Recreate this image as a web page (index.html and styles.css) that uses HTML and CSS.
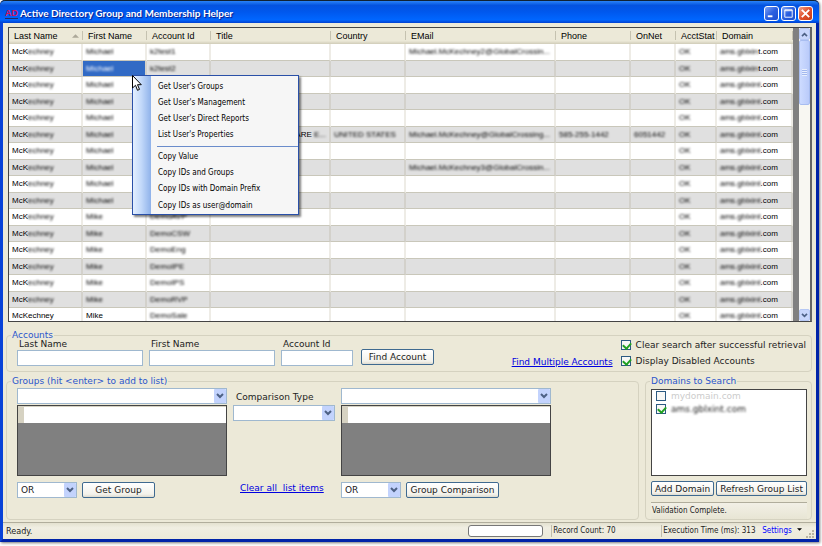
FILE: index.html
```html
<!DOCTYPE html>
<html lang="en">
<head>
  <meta charset="UTF-8">
  <meta name="viewport" content="width=device-width, initial-scale=1.0">
  <title>Active Directory Group and Membership Helper</title>
  <link rel="stylesheet" href="styles.css">
</head>
<body>
  <div class="window">
    <header class="titlebar">
      <span class="logo">AD</span>
      <h1>Active Directory Group and Membership Helper</h1>
      <button class="win-btn" aria-label="Minimize"><svg viewBox="0 0 14 14"><rect x="3" y="9" width="5" height="2" fill="#fff"/></svg></button>
      <button class="win-btn" aria-label="Maximize"><svg viewBox="0 0 14 14"><path d="M3 3h8v8H3z M3 4h8" fill="none" stroke="#fff"/></svg></button>
      <button class="win-btn close" aria-label="Close"><svg viewBox="0 0 14 14"><path d="M3 3l8 8M11 3l-8 8" stroke="#fff" stroke-width="2"/></svg></button>
    </header>

    <main class="client">
      <div class="grid-panel">
        <div class="grid">
          <div class="table-wrap">
            <table>
              <colgroup>
                <col class="c-last"><col class="c-first"><col class="c-id"><col><col class="c-country">
                <col class="c-mail"><col class="c-phone"><col class="c-net"><col class="c-stat"><col class="c-domain">
              </colgroup>
              <thead>
                <tr>
                  <th>Last Name <svg class="sort" viewBox="0 0 8 4"><path d="M0 4l4-4 4 4z" fill="#aca899"/></svg></th>
                  <th>First Name</th><th>Account Id</th><th>Title</th><th>Country</th>
                  <th>EMail</th><th>Phone</th><th>OnNet</th><th>AcctStat</th><th>Domain</th>
                </tr>
              </thead>
              <tbody id="rows"></tbody>
            </table>
          </div>
          <div class="scrollbar">
            <button class="sb-btn" aria-label="Scroll up"><svg viewBox="0 0 8 6"><path d="M1 5l3-3 3 3" fill="none" stroke="#4d6185" stroke-width="2"/></svg></button>
            <div class="thumb"><i></i></div>
            <button class="sb-btn down" aria-label="Scroll down"><svg viewBox="0 0 8 6"><path d="M1 1l3 3 3-3" fill="none" stroke="#4d6185" stroke-width="2"/></svg></button>
          </div>
        </div>

        <div class="menu">
          <button>Get User's Groups</button>
          <button>Get User's Management</button>
          <button>Get User's Direct Reports</button>
          <button>List User's Properties</button>
          <hr>
          <button>Copy Value</button>
          <button>Copy IDs and Groups</button>
          <button>Copy IDs with Domain Prefix</button>
          <button>Copy IDs as user@domain</button>
        </div>
        <svg class="cursor" viewBox="0 0 10 17"><path d="M.5.5v12.500l3-2.700 2 5 2-.9-2-4.700h3.800z" fill="#fff" stroke="#000"/></svg>
      </div>

      <fieldset class="accounts">
        <legend>Accounts</legend>
        <div class="field wide"><label for="last">Last Name</label><input type="text" id="last"></div>
        <div class="field wide"><label for="first">First Name</label><input type="text" id="first"></div>
        <div class="field"><label for="acct">Account Id</label><input type="text" id="acct"></div>
        <button class="btn find">Find Account</button>
        <a href="#" class="multi">Find Multiple Accounts</a>
        <div class="checks">
          <label><input type="checkbox" checked> Clear search after successful retrieval</label>
          <label><input type="checkbox" checked> Display Disabled Accounts</label>
        </div>
      </fieldset>

      <div class="lower">
        <fieldset class="groups">
          <legend>Groups (hit &lt;enter&gt; to add to list)</legend>
          <div class="group-col">
            <div class="combo"><select aria-label="Group"><option></option></select><svg viewBox="0 0 12 14"><use href="#chev"/></svg></div>
            <div class="listbox"><div class="list-row"></div></div>
            <div class="actions">
              <div class="combo small"><select aria-label="Group operator"><option>OR</option><option>AND</option></select><svg viewBox="0 0 12 14"><use href="#chev"/></svg></div>
              <button class="btn get">Get Group</button>
            </div>
          </div>
          <div class="compare">
            <label for="cmp">Comparison Type</label>
            <div class="combo"><select id="cmp"><option></option></select><svg viewBox="0 0 12 14"><use href="#chev"/></svg></div>
            <a href="#" class="clear">Clear all&nbsp; list items</a>
          </div>
          <div class="group-col">
            <div class="combo"><select aria-label="Comparison group"><option></option></select><svg viewBox="0 0 12 14"><use href="#chev"/></svg></div>
            <div class="listbox"><div class="list-row"></div></div>
            <div class="actions">
              <div class="combo small"><select aria-label="Comparison operator"><option>OR</option><option>AND</option></select><svg viewBox="0 0 12 14"><use href="#chev"/></svg></div>
              <button class="btn comparison">Group Comparison</button>
            </div>
          </div>
        </fieldset>

        <fieldset class="domains">
          <legend>Domains to Search</legend>
          <div class="domain-list">
            <label class="off"><input type="checkbox"> mydomain.com</label>
            <label><input type="checkbox" checked> <span class="blur">ams.gblxint.com</span></label>
          </div>
          <div class="domain-actions">
            <button class="btn">Add Domain</button>
            <button class="btn">Refresh Group List</button>
          </div>
          <div class="validation">Validation Complete.</div>
        </fieldset>
      </div>
    </main>

    <footer class="statusbar">
      <span class="ready">Ready.</span>
      <div class="progress"></div>
      <span class="count">Record Count: 70</span>
      <span class="time">Execution Time (ms): 313</span>
      <button class="settings">Settings <svg viewBox="0 0 6 3"><path d="M0 0h6l-3 3z" fill="#000"/></svg></button>
      <svg class="grip" viewBox="0 0 9 9"><path d="M7 1h2v2H7zM4 4h2v2H4zM7 4h2v2H7zM1 7h2v2H1zM4 7h2v2H4zM7 7h2v2H7z" fill="#b8b4a2"/></svg>
    </footer>
  </div>

  <svg class="defs">
    <symbol id="chev" viewBox="0 0 12 14">
      <rect width="12" height="14" rx="1" fill="#c3d3fd"/>
      <path d="M3 5l3 3 3-3" fill="none" stroke="#4d6185" stroke-width="2"/>
    </symbol>
  </svg>

  <script>
    // first name, account id, then optional title / country / mail / phone / onnet
    const accounts = [
      ['Michael', 'k2test1', { mail: 'Michael.McKechney2@GlobalCrossin...' }],
      ['Michael', 'k2test2', {}],
      ['Michael', '', {}],
      ['Michael', '', {}],
      ['Michael', '', {}],
      ['Michael', '', { title: 'ARE', country: 'UNITED STATES', mail: 'Michael.McKechney@GlobalCrossing...', phone: '585-255-1442', net: '6051442' }],
      ['Michael', '', {}],
      ['Michael', '', { mail: 'Michael.McKechney3@GlobalCrossin...' }],
      ['Michael', '', {}],
      ['Michael', '', {}],
      ['Mike', 'DemoAVP', {}],
      ['Mike', 'DemoCSW', {}],
      ['Mike', 'DemoEng', {}],
      ['Mike', 'DemoIPE', {}],
      ['Mike', 'DemoIPS', {}],
      ['Mike', 'DemoRVP', {}],
      ['Mike', 'DemoSale', {}]
    ];
    const blur = text => text ? `<span class="blur">${text}</span>` : '';

    document.getElementById('rows').innerHTML = accounts.map(([first, id, more], i) => {
      const last = i === accounts.length - 1;
      const domain = i < 2 ? blur('ams.gblxin') + 't.com' : blur('ams.gblxint') + '.com';
      return `<tr>
        <td>${last ? 'McKechney' : 'McK' + blur('echney')}</td>
        <td class="${i === 1 ? 'selected' : ''}">${last ? first : blur(first)}</td>
        <td>${blur(id)}</td>
        <td class="title">${more.title ? more.title + ' ' + blur('E...') : ''}</td>
        <td>${blur(more.country)}</td>
        <td>${blur(more.mail)}</td>
        <td>${blur(more.phone)}</td>
        <td>${blur(more.net)}</td>
        <td>${blur('OK')}</td>
        <td>${domain}</td>
      </tr>`;
    }).join('');
  </script>
</body>
</html>
```
FILE: styles.css
```css
* {
  box-sizing: border-box;
}
body {
  margin: 0;
  padding: 0 3px 4px 0;
  height: 100vh;
  background: #fff;
  font: 9px/10px "DejaVu Sans", Verdana, sans-serif;
  color: #222;
  overflow: hidden;
}
button, input, select {
  margin: 0;
  font: inherit;
  color: inherit;
}
a {
  color: #0000e0;
}
.defs {
  display: none;
}
.blur {
  filter: blur(1px);
}

.window {
  display: flex;
  flex-direction: column;
  height: 100%;
  border: 3px solid #0842d8;
  border-color: #0842d8 #0023a8 #0023a8 #0842d8;
  border-top: 0;
  border-radius: 5px 5px 0 0;
  background: #ece9d8;
  box-shadow: 1px 1px 3px #777;
}

/* title bar */
.titlebar {
  display: flex;
  align-items: center;
  gap: 2px;
  flex: none;
  height: 23px;
  margin: 0 -3px;
  padding: 2px 6px 0 5px;
  border-top: 1px solid #123;
  border-radius: 5px 5px 0 0;
  background: linear-gradient(#2a83f8, #0453e0 20%, #0058ee 50%, #0066ff 85%, #0040d0);
}
.logo {
  color: #d4145a;
  font: bold 9px/10px "Liberation Sans", Arial, sans-serif;
  border-bottom: 1px solid #222a60;
}
.titlebar h1 {
  flex: 1;
  margin: 0;
  color: #fff;
  font: bold 10px/14px Lato, "Trebuchet MS", sans-serif;
  text-shadow: 1px 1px 1px #0a1883;
}
.win-btn {
  width: 15px;
  height: 15px;
  padding: 0;
  border: 1px solid #fff;
  border-radius: 3px;
  background: linear-gradient(135deg, #7fa4f5, #2a5fe0 50%, #1c4fd0);
}
.win-btn svg {
  display: block;
}
.win-btn.close {
  background: linear-gradient(135deg, #f0a088, #e0502c 50%, #c83c14);
}

.client {
  display: flex;
  flex-direction: column;
  flex: 1;
  min-height: 0;
  padding: 4px 4px 2px 3px;
}

/* account grid */
.grid-panel {
  position: relative;
  flex: 1;
  min-height: 0;
  margin: 0 0 8px 2px;
}
.grid {
  display: flex;
  height: 100%;
  border: 1px solid #444;
  border-right: 2px solid #666;
  background: #808080;
  overflow: hidden;
}
.table-wrap {
  flex: 1;
  min-width: 0;
}
table {
  width: 100%;
  border-collapse: separate;
  border-spacing: 0;
  table-layout: fixed;
  font: 8px/12px "Liberation Sans", Arial, sans-serif;
  color: #000;
  background: #fff;
}
.c-last { width: 74px; }
.c-first, .c-id { width: 64px; }
.c-country, .c-phone { width: 75px; }
.c-mail { width: 150px; }
.c-net { width: 45px; }
.c-stat { width: 41px; }
.c-domain { width: 76px; }
th {
  position: relative;
  height: 16px;
  padding: 0 0 0 5px;
  background: linear-gradient(#ece9d8 80%, #d0ccb8);
  font-size: 9px;
  font-weight: normal;
  text-align: left;
  white-space: nowrap;
}
th::after {
  content: "";
  position: absolute;
  right: 0;
  top: 3px;
  height: 9px;
  border-right: 1px solid #c5c2b0;
}
.sort {
  float: right;
  width: 7px;
  height: 4px;
  margin: 4px 4px 0 0;
}
td {
  height: 17px;
  padding: 0 0 0 3px;
  border-right: 2px solid #eeece6;
  border-bottom: 1px solid #c9c7ba;
  white-space: nowrap;
}
tr:nth-child(even) td {
  height: 16px;
  background: #e0e0e0;
  border-right-color: #d3d1cb;
}
tr td.selected {
  background: #316ac5 !important;
  color: #fff;
}
td.title {
  padding-right: 3px;
  text-align: right;
}

.scrollbar {
  display: flex;
  flex-direction: column;
  flex: none;
  width: 11px;
  margin-left: 6px;
  background: #f8f7f2;
}
.sb-btn {
  display: flex;
  align-items: center;
  justify-content: center;
  width: 11px;
  height: 12px;
  padding: 0;
  border: 1px solid #b6c8f4;
  border-radius: 2px;
  background: #c8d6fb;
}
.sb-btn svg {
  flex: none;
  width: 7px;
  height: 5px;
}
.sb-btn.down {
  margin-top: auto;
}
.thumb {
  display: flex;
  align-items: center;
  justify-content: center;
  height: 65px;
  border: 1px solid #a8bdf0;
  border-radius: 2px;
  background: linear-gradient(90deg, #cddbff, #bacbfa);
}
.thumb i {
  width: 5px;
  height: 7px;
  background: repeating-linear-gradient(#e8effe 0 1px, #a3b8ee 1px 2px);
}

/* context menu */
.menu {
  position: absolute;
  left: 124px;
  top: 48px;
  width: 167px;
  padding: 3px 0 0 18px;
  border: 1px solid #2a50a8;
  background: linear-gradient(90deg, #e3efff, #c4dafa 8px, #8fb2ea 18px, #f6f6f6 18px);
  box-shadow: 2px 2px 2px rgba(0,0,0,0.5);
  color: #000;
  font: 8px/12px "DejaVu Sans Condensed", Tahoma, sans-serif;
}
.menu button {
  display: block;
  width: 100%;
  height: 16px;
  padding: 0 0 0 7px;
  border: 0;
  background: none;
  text-align: left;
  white-space: nowrap;
}
.menu hr {
  margin: 3px 0 2px 6px;
  border: 0;
  border-top: 1px solid #6a8ccb;
}
.menu button:last-child {
  height: 17px;
}
.cursor {
  position: absolute;
  left: 124px;
  top: 48px;
  width: 10px;
  height: 17px;
}

/* group boxes */
fieldset {
  min-width: 0;
  margin: 0;
  padding: 0 5px;
  border: 1px solid #d5d2c0;
  border-radius: 4px;
}
legend {
  margin-left: -1px;
  padding: 0 1px;
  color: #2a55cc;
  line-height: 10px;
}
.accounts legend, .groups legend {
  margin-left: -6px;
}
input[type="text"], .combo {
  border: 1px solid #9fb8cf;
  background: #fff;
}
.btn {
  height: 16px;
  padding: 0;
  border: 1px solid #3f6a90;
  border-radius: 2px;
  background: linear-gradient(#fff, #f3f2eb 80%, #dedbd0);
  white-space: nowrap;
}
input[type="checkbox"] {
  position: relative;
  appearance: none;
  flex: none;
  width: 10px;
  height: 10px;
  border: 1px solid #2c5a82;
  background: #f8f8f6;
}
input[type="checkbox"]:checked::after {
  content: "";
  position: absolute;
  left: 2px;
  top: 0;
  width: 4px;
  height: 6px;
  border: solid #21a121;
  border-width: 0 2px 2px 0;
  transform: rotate(42deg);
}

.accounts {
  display: flex;
  align-items: flex-start;
  gap: 6px;
  margin-bottom: 4px;
  padding: 0 5px 4px 10px;
}
.field {
  width: 72px;
}
.field.wide {
  width: 126px;
}
.field label {
  display: block;
  padding: 0 0 1px 2px;
  line-height: 9px;
}
.field input {
  display: block;
  width: 100%;
  height: 16px;
}
.find {
  width: 73px;
  margin: 9px 0 0 2px;
}
.multi {
  margin: 17px 2px 0 auto;
}
.checks {
  display: flex;
  flex-direction: column;
  gap: 6px;
}
.checks label, .domain-list label {
  display: flex;
  align-items: center;
  gap: 5px;
  white-space: nowrap;
}

.lower {
  display: grid;
  grid-template-columns: 1fr 167px;
  gap: 6px;
}
.groups {
  display: flex;
  gap: 6px;
  padding: 2px 5px 0 10px;
}
.group-col {
  display: flex;
  flex-direction: column;
  gap: 1px;
  flex: 0 1 210px;
}
.combo {
  position: relative;
  height: 16px;
}
.combo select {
  display: block;
  appearance: none;
  width: 100%;
  height: 14px;
  padding: 0 3px;
  border: 0;
  background: none;
}
.combo svg {
  position: absolute;
  right: 0;
  top: 0;
  width: 12px;
  height: 14px;
  pointer-events: none;
}
.listbox {
  height: 71px;
  border: 1px solid #444;
  background: #808080;
}
.list-row {
  height: 17px;
  border: solid #d6d2c2;
  border-width: 1px 0 0 6px;
  background: #fff;
}
.actions {
  display: flex;
  gap: 5px;
  margin-top: 5px;
}
.combo.small {
  width: 60px;
}
.get {
  width: 73px;
}
.comparison {
  width: 93px;
}
.compare {
  display: flex;
  flex-direction: column;
  width: 102px;
}
.compare label {
  padding: 4px 0 3px 3px;
}
.clear {
  margin: 62px 0 0 7px;
}

.domains {
  padding: 3px 4px 0 5px;
}
.domain-list {
  display: flex;
  flex-direction: column;
  gap: 3px;
  height: 87px;
  padding: 1px 4px;
  border: 1px solid #444;
  background: #fff;
}
.off {
  color: #ccc;
}
.domain-actions {
  display: flex;
  gap: 2px;
  margin-top: 5px;
}
.domain-actions .btn {
  flex: 1 1 auto;
  height: 15px;
}
.validation {
  margin-top: 6px;
  padding: 2px 0 2px 1px;
  border-top: 1px solid #b0ad9c;
  background: linear-gradient(#f2f0e6, #e8e5d4);
  font: 8px/12px "DejaVu Sans Condensed", Tahoma, sans-serif;
}

.statusbar {
  display: flex;
  align-items: center;
  flex: none;
  height: 17px;
  padding-left: 3px;
  border-top: 1px solid #b0ad9c;
  background: linear-gradient(#e4e1d0, #f0eee2 30%, #ece9d8);
  font: 8px/12px "DejaVu Sans Condensed", Tahoma, sans-serif;
  white-space: nowrap;
}
.ready {
  flex: 1;
  font-size: 9px;
}
.progress {
  width: 75px;
  height: 12px;
  margin-right: 8px;
  border: 1px solid #777;
  border-radius: 3px;
  background: #fff;
}
.count, .time {
  padding-left: 1px;
  border-left: 1px solid #c0bdac;
}
.count {
  width: 110px;
}
.time {
  width: 101px;
}
.settings {
  padding: 0;
  border: 0;
  background: none;
  color: #00f;
}
.settings svg {
  width: 5px;
  height: 3px;
  margin: 0 0 2px 3px;
}
.grip {
  width: 9px;
  height: 9px;
  margin: 4px 2px 0 3px;
}
```
